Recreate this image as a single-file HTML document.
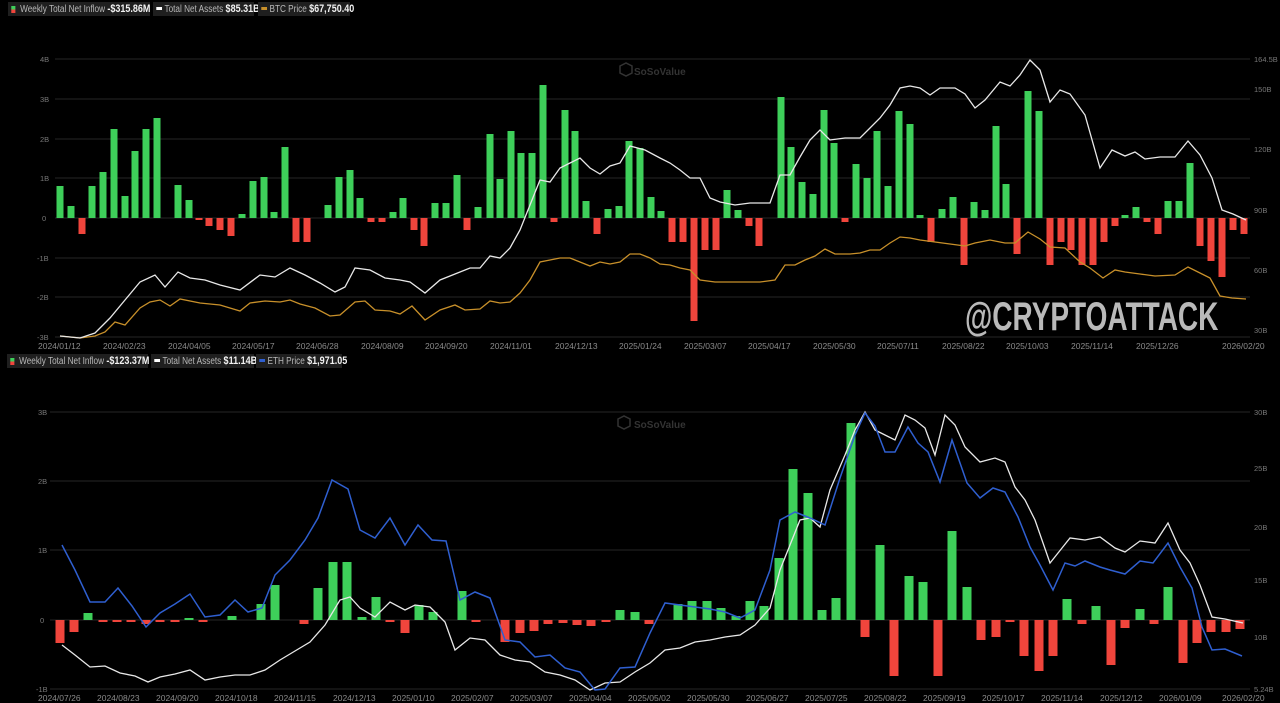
<!DOCTYPE html>
<html><head><meta charset="utf-8"><style>
html,body{margin:0;padding:0;background:#000;}
body{width:1280px;height:703px;overflow:hidden;position:relative;font-family:"Liberation Sans",sans-serif;}
.lg{position:absolute;height:14px;background:#1f1f1f;color:#b8b8b8;font-size:10px;line-height:14px;white-space:nowrap;overflow:visible;}
.lg span.t{display:inline-block;transform:scaleX(0.82);transform-origin:left center;padding-left:4px;}
.lg b{color:#f2f2f2;font-size:11px;}
.sw{display:inline-block;width:7px;height:3px;vertical-align:middle;margin-right:3px;position:relative;top:-1px}
.wm{position:absolute;left:965px;top:295px;font-family:"Liberation Sans",sans-serif;font-weight:bold;font-size:40px;color:#b9b9b9;transform:scaleX(0.70);transform-origin:left;white-space:nowrap;}
</style></head><body>
<svg width="1280" height="703" style="position:absolute;left:0;top:0" font-family="Liberation Sans, sans-serif">
<g stroke="#262626" stroke-width="1">
<line x1="55" y1="59" x2="1250" y2="59"/><line x1="55" y1="99" x2="1250" y2="99"/><line x1="55" y1="139" x2="1250" y2="139"/><line x1="55" y1="178" x2="1250" y2="178"/><line x1="55" y1="218" x2="1250" y2="218"/><line x1="55" y1="258" x2="1250" y2="258"/><line x1="55" y1="297" x2="1250" y2="297"/><line x1="55" y1="337" x2="1250" y2="337"/>
<line x1="50" y1="412" x2="1250" y2="412"/><line x1="50" y1="481" x2="1250" y2="481"/><line x1="50" y1="550" x2="1250" y2="550"/><line x1="50" y1="620" x2="1250" y2="620"/><line x1="50" y1="689" x2="1250" y2="689"/>
</g>
<g fill="#777" font-size="7.5">
<text x="40" y="62">4B</text><text x="40" y="102">3B</text><text x="40" y="142">2B</text><text x="40" y="181">1B</text><text x="42" y="221">0</text><text x="37" y="261">-1B</text><text x="37" y="300">-2B</text><text x="37" y="340">-3B</text>
<text x="1254" y="62">164.5B</text><text x="1254" y="92">150B</text><text x="1254" y="152">120B</text><text x="1254" y="213">90B</text><text x="1254" y="273">60B</text><text x="1254" y="333">30B</text>
<text x="38" y="415">3B</text><text x="38" y="484">2B</text><text x="38" y="553">1B</text><text x="40" y="623">0</text><text x="36" y="692">-1B</text>
<text x="1254" y="415">30B</text><text x="1254" y="471">25B</text><text x="1254" y="530">20B</text><text x="1254" y="583">15B</text><text x="1254" y="640">10B</text><text x="1254" y="692">5.24B</text>
</g>
<g fill="#8a8a8a" font-size="8.5">
<text x="38" y="349">2024/01/12</text><text x="103" y="349">2024/02/23</text><text x="168" y="349">2024/04/05</text><text x="232" y="349">2024/05/17</text><text x="296" y="349">2024/06/28</text><text x="361" y="349">2024/08/09</text><text x="425" y="349">2024/09/20</text><text x="490" y="349">2024/11/01</text><text x="555" y="349">2024/12/13</text><text x="619" y="349">2025/01/24</text><text x="684" y="349">2025/03/07</text><text x="748" y="349">2025/04/17</text><text x="813" y="349">2025/05/30</text><text x="877" y="349">2025/07/11</text><text x="942" y="349">2025/08/22</text><text x="1006" y="349">2025/10/03</text><text x="1071" y="349">2025/11/14</text><text x="1136" y="349">2025/12/26</text><text x="1222" y="349">2026/02/20</text>
<text x="38" y="701">2024/07/26</text><text x="97" y="701">2024/08/23</text><text x="156" y="701">2024/09/20</text><text x="215" y="701">2024/10/18</text><text x="274" y="701">2024/11/15</text><text x="333" y="701">2024/12/13</text><text x="392" y="701">2025/01/10</text><text x="451" y="701">2025/02/07</text><text x="510" y="701">2025/03/07</text><text x="569" y="701">2025/04/04</text><text x="628" y="701">2025/05/02</text><text x="687" y="701">2025/05/30</text><text x="746" y="701">2025/06/27</text><text x="805" y="701">2025/07/25</text><text x="864" y="701">2025/08/22</text><text x="923" y="701">2025/09/19</text><text x="982" y="701">2025/10/17</text><text x="1041" y="701">2025/11/14</text><text x="1100" y="701">2025/12/12</text><text x="1159" y="701">2026/01/09</text><text x="1222" y="701">2026/02/20</text>
</g>
<g fill="#333" font-size="10" font-weight="bold"><text x="634" y="75">SoSoValue</text><text x="634" y="428">SoSoValue</text></g>
<g fill="none" stroke="#333" stroke-width="1.5"><path d="M620 66 l6 -3 6 3 v7 l-6 3 -6 -3z"/><path d="M618 419 l6 -3 6 3 v7 l-6 3 -6 -3z"/></g>

<g fill="#3ecf5a">
<rect x="56.5" y="186" width="7" height="32"/><rect x="67.5" y="206" width="7" height="12"/><rect x="88.5" y="186" width="7" height="32"/><rect x="99.5" y="172" width="7" height="46"/><rect x="110.5" y="129" width="7" height="89"/><rect x="121.5" y="196" width="7" height="22"/><rect x="131.5" y="151" width="7" height="67"/><rect x="142.5" y="129" width="7" height="89"/><rect x="153.5" y="118" width="7" height="100"/><rect x="174.5" y="185" width="7" height="33"/><rect x="185.5" y="200" width="7" height="18"/><rect x="238.5" y="214" width="7" height="4"/><rect x="249.5" y="181" width="7" height="37"/><rect x="260.5" y="177" width="7" height="41"/><rect x="270.5" y="212" width="7" height="6"/><rect x="281.5" y="147" width="7" height="71"/><rect x="324.5" y="205" width="7" height="13"/><rect x="335.5" y="177" width="7" height="41"/><rect x="346.5" y="170" width="7" height="48"/><rect x="356.5" y="198" width="7" height="20"/><rect x="389.5" y="212" width="7" height="6"/><rect x="399.5" y="198" width="7" height="20"/><rect x="431.5" y="203" width="7" height="15"/><rect x="442.5" y="203" width="7" height="15"/><rect x="453.5" y="175" width="7" height="43"/><rect x="474.5" y="207" width="7" height="11"/><rect x="486.5" y="134" width="7" height="84"/><rect x="496.5" y="179" width="7" height="39"/><rect x="507.5" y="131" width="7" height="87"/><rect x="517.5" y="153" width="7" height="65"/><rect x="528.5" y="153" width="7" height="65"/><rect x="539.5" y="85" width="7" height="133"/><rect x="561.5" y="110" width="7" height="108"/><rect x="571.5" y="131" width="7" height="87"/><rect x="582.5" y="201" width="7" height="17"/><rect x="604.5" y="209" width="7" height="9"/><rect x="615.5" y="206" width="7" height="12"/><rect x="625.5" y="141" width="7" height="77"/><rect x="636.5" y="148" width="7" height="70"/><rect x="647.5" y="197" width="7" height="21"/><rect x="657.5" y="211" width="7" height="7"/><rect x="723.5" y="190" width="7" height="28"/><rect x="734.5" y="210" width="7" height="8"/><rect x="777.5" y="97" width="7" height="121"/><rect x="787.5" y="147" width="7" height="71"/><rect x="798.5" y="182" width="7" height="36"/><rect x="809.5" y="194" width="7" height="24"/><rect x="820.5" y="110" width="7" height="108"/><rect x="830.5" y="143" width="7" height="75"/><rect x="852.5" y="164" width="7" height="54"/><rect x="863.5" y="178" width="7" height="40"/><rect x="873.5" y="131" width="7" height="87"/><rect x="884.5" y="186" width="7" height="32"/><rect x="895.5" y="111" width="7" height="107"/><rect x="906.5" y="124" width="7" height="94"/><rect x="916.5" y="215" width="7" height="3"/><rect x="938.5" y="209" width="7" height="9"/><rect x="949.5" y="197" width="7" height="21"/><rect x="970.5" y="202" width="7" height="16"/><rect x="981.5" y="210" width="7" height="8"/><rect x="992.5" y="126" width="7" height="92"/><rect x="1002.5" y="184" width="7" height="34"/><rect x="1024.5" y="91" width="7" height="127"/><rect x="1035.5" y="111" width="7" height="107"/><rect x="1121.5" y="215" width="7" height="3"/><rect x="1132.5" y="207" width="7" height="11"/><rect x="1164.5" y="201" width="7" height="17"/><rect x="1175.5" y="201" width="7" height="17"/><rect x="1186.5" y="163" width="7" height="55"/>
</g>
<g fill="#f0453c">
<rect x="78.5" y="218" width="7" height="16"/><rect x="195.5" y="218" width="7" height="2"/><rect x="205.5" y="218" width="7" height="8"/><rect x="216.5" y="218" width="7" height="12"/><rect x="227.5" y="218" width="7" height="18"/><rect x="292.5" y="218" width="7" height="24"/><rect x="303.5" y="218" width="7" height="24"/><rect x="367.5" y="218" width="7" height="4"/><rect x="378.5" y="218" width="7" height="4"/><rect x="410.5" y="218" width="7" height="12"/><rect x="420.5" y="218" width="7" height="28"/><rect x="463.5" y="218" width="7" height="12"/><rect x="550.5" y="218" width="7" height="4"/><rect x="593.5" y="218" width="7" height="16"/><rect x="668.5" y="218" width="7" height="24"/><rect x="679.5" y="218" width="7" height="24"/><rect x="690.5" y="218" width="7" height="103"/><rect x="701.5" y="218" width="7" height="32"/><rect x="712.5" y="218" width="7" height="32"/><rect x="745.5" y="218" width="7" height="8"/><rect x="755.5" y="218" width="7" height="28"/><rect x="841.5" y="218" width="7" height="4"/><rect x="927.5" y="218" width="7" height="24"/><rect x="960.5" y="218" width="7" height="47"/><rect x="1013.5" y="218" width="7" height="36"/><rect x="1046.5" y="218" width="7" height="47"/><rect x="1057.5" y="218" width="7" height="24"/><rect x="1067.5" y="218" width="7" height="32"/><rect x="1078.5" y="218" width="7" height="47"/><rect x="1089.5" y="218" width="7" height="47"/><rect x="1100.5" y="218" width="7" height="24"/><rect x="1111.5" y="218" width="7" height="8"/><rect x="1143.5" y="218" width="7" height="4"/><rect x="1154.5" y="218" width="7" height="16"/><rect x="1196.5" y="218" width="7" height="28"/><rect x="1207.5" y="218" width="7" height="43"/><rect x="1218.5" y="218" width="7" height="59"/><rect x="1229.5" y="218" width="7" height="12"/><rect x="1240.5" y="218" width="7" height="16"/>
</g>
<polyline fill="none" stroke="#c8902a" stroke-width="1.3" points="60,336 80,338 95,336 105,332 115,322 125,325 140,308 150,302 160,300 170,306 180,299 200,303 220,305 240,311 250,303 265,301 280,302 290,300 300,304 315,308 330,316 340,315 355,302 365,301 375,310 390,311 400,314 412,306 425,320 440,310 455,305 465,310 480,309 490,301 500,303 510,302 520,293 530,280 540,262 550,260 560,258 570,258 580,262 590,266 600,262 610,264 620,262 630,254 640,254 650,258 660,264 670,265 680,268 690,270 700,280 715,282 740,282 760,282 775,280 785,265 795,265 805,260 815,256 825,249 835,254 850,254 860,253 870,250 880,250 890,243 900,237 910,238 920,240 935,242 950,244 965,246 975,243 990,240 1005,243 1015,243 1028,232 1040,239 1050,247 1065,248 1080,262 1090,268 1103,278 1115,270 1125,272 1140,274 1155,276 1175,275 1188,267 1200,273 1210,278 1220,296 1232,298 1246,299"/>
<polyline fill="none" stroke="#e8e8e8" stroke-width="1.3" points="60,336 80,338 95,333 110,318 125,300 140,282 155,275 165,287 178,272 190,278 205,280 220,285 240,290 260,275 275,277 290,268 305,275 320,283 335,292 345,287 355,268 370,270 385,278 400,280 410,282 425,293 440,280 455,274 470,268 480,268 490,256 500,258 510,248 520,230 530,205 540,180 550,182 560,168 570,163 580,158 590,168 600,174 610,166 620,163 630,146 645,150 660,158 670,163 680,170 690,178 700,178 710,198 720,202 735,205 750,203 770,203 780,175 790,175 800,157 810,140 820,130 830,140 845,138 860,138 870,128 880,118 890,105 900,88 910,86 920,88 930,95 940,88 955,88 965,94 975,108 985,100 1000,82 1010,86 1020,75 1030,60 1040,70 1050,102 1060,90 1070,94 1085,115 1100,168 1112,150 1125,156 1135,152 1145,159 1160,157 1175,157 1188,141 1200,155 1212,178 1222,210 1233,214 1246,220"/>

<g fill="#3ecf5a">
<rect x="83.5" y="613" width="9" height="7"/><rect x="184.5" y="618" width="9" height="2"/><rect x="227.5" y="616" width="9" height="4"/><rect x="256.5" y="604" width="9" height="16"/><rect x="270.5" y="585" width="9" height="35"/><rect x="313.5" y="588" width="9" height="32"/><rect x="328.5" y="562" width="9" height="58"/><rect x="342.5" y="562" width="9" height="58"/><rect x="357.5" y="617" width="9" height="3"/><rect x="371.5" y="597" width="9" height="23"/><rect x="414.5" y="605" width="9" height="15"/><rect x="428.5" y="612" width="9" height="8"/><rect x="457.5" y="591" width="9" height="29"/><rect x="615.5" y="610" width="9" height="10"/><rect x="630.5" y="612" width="9" height="8"/><rect x="673.5" y="604" width="9" height="16"/><rect x="687.5" y="601" width="9" height="19"/><rect x="702.5" y="601" width="9" height="19"/><rect x="716.5" y="608" width="9" height="12"/><rect x="731.5" y="616" width="9" height="4"/><rect x="745.5" y="601" width="9" height="19"/><rect x="759.5" y="606" width="9" height="14"/><rect x="774.5" y="558" width="9" height="62"/><rect x="788.5" y="469" width="9" height="151"/><rect x="803.5" y="493" width="9" height="127"/><rect x="817.5" y="610" width="9" height="10"/><rect x="831.5" y="598" width="9" height="22"/><rect x="846.5" y="423" width="9" height="197"/><rect x="875.5" y="545" width="9" height="75"/><rect x="904.5" y="576" width="9" height="44"/><rect x="918.5" y="582" width="9" height="38"/><rect x="947.5" y="531" width="9" height="89"/><rect x="962.5" y="587" width="9" height="33"/><rect x="1062.5" y="599" width="9" height="21"/><rect x="1091.5" y="606" width="9" height="14"/><rect x="1135.5" y="609" width="9" height="11"/><rect x="1163.5" y="587" width="9" height="33"/>
</g>
<g fill="#f0453c">
<rect x="55.5" y="620" width="9" height="23"/><rect x="69.5" y="620" width="9" height="12"/><rect x="98.5" y="620" width="9" height="2"/><rect x="112.5" y="620" width="9" height="2"/><rect x="126.5" y="620" width="9" height="2"/><rect x="141.5" y="620" width="9" height="4"/><rect x="155.5" y="620" width="9" height="2"/><rect x="170.5" y="620" width="9" height="2"/><rect x="198.5" y="620" width="9" height="2"/><rect x="299.5" y="620" width="9" height="4"/><rect x="385.5" y="620" width="9" height="2"/><rect x="400.5" y="620" width="9" height="13"/><rect x="471.5" y="620" width="9" height="2"/><rect x="500.5" y="620" width="9" height="22"/><rect x="515.5" y="620" width="9" height="13"/><rect x="529.5" y="620" width="9" height="11"/><rect x="543.5" y="620" width="9" height="4"/><rect x="558.5" y="620" width="9" height="3"/><rect x="572.5" y="620" width="9" height="5"/><rect x="586.5" y="620" width="9" height="6"/><rect x="601.5" y="620" width="9" height="2"/><rect x="644.5" y="620" width="9" height="4"/><rect x="860.5" y="620" width="9" height="17"/><rect x="889.5" y="620" width="9" height="56"/><rect x="933.5" y="620" width="9" height="56"/><rect x="976.5" y="620" width="9" height="20"/><rect x="991.5" y="620" width="9" height="17"/><rect x="1005.5" y="620" width="9" height="2"/><rect x="1019.5" y="620" width="9" height="36"/><rect x="1034.5" y="620" width="9" height="51"/><rect x="1048.5" y="620" width="9" height="36"/><rect x="1077.5" y="620" width="9" height="4"/><rect x="1106.5" y="620" width="9" height="45"/><rect x="1120.5" y="620" width="9" height="8"/><rect x="1149.5" y="620" width="9" height="4"/><rect x="1178.5" y="620" width="9" height="43"/><rect x="1192.5" y="620" width="9" height="23"/><rect x="1206.5" y="620" width="9" height="12"/><rect x="1221.5" y="620" width="9" height="12"/><rect x="1235.5" y="620" width="9" height="9"/>
</g>
<polyline fill="none" stroke="#e8e8e8" stroke-width="1.3" points="62,645 75,655 90,667 105,666 120,673 135,676 148,682 160,677 175,674 190,670 205,680 220,677 235,675 250,675 265,670 280,660 295,651 310,642 325,625 340,600 350,597 360,608 375,617 390,602 405,610 415,605 430,607 445,622 455,650 470,638 485,640 500,655 515,660 530,662 545,672 560,675 575,680 590,690 605,683 620,682 635,672 650,663 665,650 680,648 695,642 710,640 725,637 740,635 755,625 770,608 780,570 790,545 800,520 810,518 820,527 830,490 845,455 855,430 865,412 875,430 885,435 895,440 905,415 915,420 925,428 935,455 945,415 955,425 965,447 980,462 995,458 1005,462 1015,487 1025,500 1035,520 1050,563 1062,548 1070,538 1085,540 1100,537 1115,548 1125,552 1140,541 1155,543 1168,523 1180,550 1190,563 1200,585 1212,617 1225,619 1243,623"/>
<polyline fill="none" stroke="#2f5fd0" stroke-width="1.5" points="62,545 75,570 90,602 105,602 118,588 132,606 146,627 160,613 175,604 190,594 205,617 220,615 235,600 248,612 262,608 275,575 290,560 305,540 318,518 332,480 348,489 360,530 375,538 390,518 405,545 418,525 432,540 446,541 460,600 475,592 490,598 505,640 520,642 535,657 550,655 565,668 580,672 595,690 605,689 620,668 635,667 650,633 665,603 680,605 695,607 710,609 725,612 740,618 755,610 770,570 780,520 795,512 810,518 825,525 840,478 855,435 865,413 875,426 885,452 895,452 908,427 918,443 928,452 940,482 952,440 967,483 980,498 993,488 1005,492 1018,517 1030,547 1040,565 1053,590 1065,563 1075,566 1085,561 1100,567 1110,570 1125,574 1140,561 1153,563 1168,543 1180,567 1192,588 1202,627 1212,650 1225,649 1242,656"/>
</svg>

<div class="lg" style="left:8px;top:2px;width:142px"><span class="t"><span class="sw" style="width:5px;height:7px;top:0;background:linear-gradient(#3ecf5a 50%,#f0453c 50%)"></span> Weekly Total Net Inflow <b>-$315.86M</b></span></div>
<div class="lg" style="left:153px;top:2px;width:101px"><span class="t"><span class="sw" style="background:#fff"></span>Total Net Assets <b>$85.31B</b></span></div>
<div class="lg" style="left:258px;top:2px;width:92px"><span class="t"><span class="sw" style="background:#c8902a"></span>BTC Price <b>$67,750.40</b></span></div>

<div class="lg" style="left:7px;top:354px;width:141px"><span class="t"><span class="sw" style="width:5px;height:7px;top:0;background:linear-gradient(#3ecf5a 50%,#f0453c 50%)"></span> Weekly Total Net Inflow <b>-$123.37M</b></span></div>
<div class="lg" style="left:151px;top:354px;width:103px"><span class="t"><span class="sw" style="background:#fff"></span>Total Net Assets <b>$11.14B</b></span></div>
<div class="lg" style="left:256px;top:354px;width:86px"><span class="t"><span class="sw" style="background:#2f5fd0"></span>ETH Price <b>$1,971.05</b></span></div>

<div class="wm">@CRYPTOATTACK</div>
</body></html>
